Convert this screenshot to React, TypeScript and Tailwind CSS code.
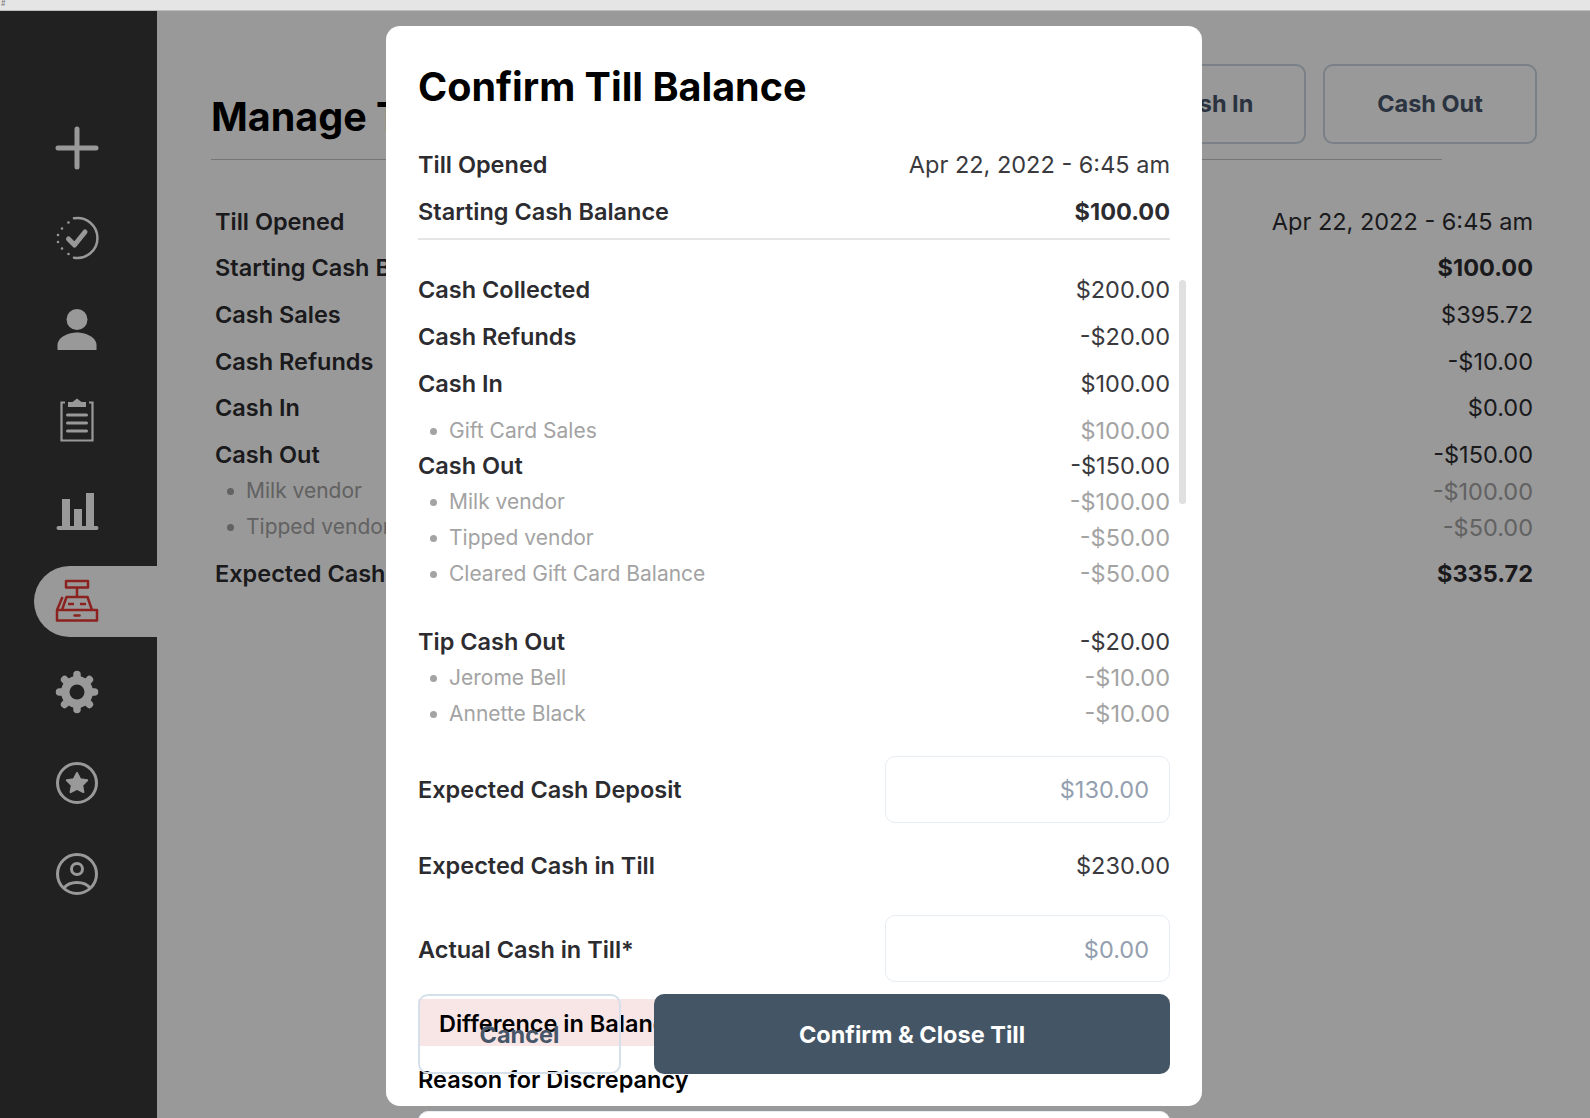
const mainRows = [
  { label: "Till Opened", value: "Apr 22, 2022 - 6:45 am" },
  { label: "Starting Cash Balance", value: "$100.00", strong: true },
  { label: "Cash Sales", value: "$395.72" },
  { label: "Cash Refunds", value: "-$10.00" },
  { label: "Cash In", value: "$0.00" },
  { label: "Cash Out", value: "-$150.00" },
];

function NavIcon({ children, active }: { children: React.ReactNode; active?: boolean }) {
  return (
    <div className={active
      ? "ml-[34px] flex h-[71px] w-[123px] items-center rounded-l-[36px] bg-white pl-[21px] text-[#e83a35]"
      : "ml-[34px] flex h-[71px] w-[123px] items-center pl-[21px] text-white"}>
      <svg viewBox="0 0 44 44" className="h-[44px] w-[44px]" fill="none" stroke="currentColor">{children}</svg>
    </div>
  );
}

function Sidebar() {
  return (
    <aside className="flex w-[157px] shrink-0 flex-col gap-[19.800px] bg-[#37373a] pt-[101px]">
      <NavIcon>
        <path d="M22 3v38M3 22h38" strokeWidth="5" strokeLinecap="round" />
      </NavIcon>
      <NavIcon>
        <path d="M19 2.300A20 20 0 1 1 19 41.700" strokeWidth="2.500" strokeLinecap="round" />
        <path d="M13.500 6.500L13.400 6.500M7 12.500L7 12.500M3 19L3 19M3 26L3 26M7 32.500L7 32.500M13.500 38L13.500 38" strokeWidth="2.600" strokeLinecap="round" />
        <path d="M13.500 23l6 6 10.500-13" strokeWidth="5" strokeLinecap="round" strokeLinejoin="round" />
      </NavIcon>
      <NavIcon>
        <circle cx="22" cy="12.500" r="10.500" fill="currentColor" stroke="none" />
        <path d="M2.500 43v-5c0-8 11.500-12.500 19.500-12.500s19.500 4.500 19.500 12.500v5z" fill="currentColor" stroke="none" />
      </NavIcon>
      <NavIcon>
        <path d="M10 4.500H6.500V42.500H37.500V4.500H34" strokeWidth="2.200" />
        <path d="M13 9V4h4.500L22 0.500 26.500 4H31v5z" fill="currentColor" stroke="none" />
        <path d="M12.500 17h19M12.500 25h19M12.500 33h19" strokeWidth="3" strokeLinecap="round" />
      </NavIcon>
      <NavIcon>
        <path d="M7 10h8v27H7zM19 20h8v17h-8zM31 4h8v33h-8z" fill="currentColor" stroke="none" />
        <path d="M3.500 39h38" strokeWidth="4" strokeLinecap="round" />
      </NavIcon>
      <NavIcon active>
        <path d="M11 2h22v6.500H11zM22 8.500v9.500M11.500 18h21l4.500 13H7zM2 31h40v10.500H2zM2 31l5.500-13M13 25h6M25 25h6" strokeWidth="2.500" strokeLinejoin="round" />
        <path d="M19.500 36.500h5" strokeWidth="2.500" strokeLinecap="round" />
      </NavIcon>
      <NavIcon>
        <circle cx="22" cy="22" r="16" fill="currentColor" stroke="none" />
        <path d="M22 4.500v35M4.500 22h35M9.600 9.600l24.800 24.800M34.400 9.600L9.600 34.400" strokeWidth="7.500" strokeLinecap="round" />
        <circle cx="22" cy="22" r="7.500" fill="#37373a" stroke="none" />
      </NavIcon>
      <NavIcon>
        <circle cx="22" cy="22" r="19.500" strokeWidth="3" />
        <path d="M22 12l3.200 6.300 7 1-5 4.900 1.200 6.900L22 27.900l-6.400 3.200 1.200-6.900-5-4.900 7-1z" fill="currentColor" stroke="currentColor" strokeWidth="2" strokeLinejoin="round" />
      </NavIcon>
      <NavIcon>
        <circle cx="22" cy="22" r="19.500" strokeWidth="3" />
        <circle cx="22" cy="17" r="5.500" strokeWidth="3" />
        <path d="M9 36c3-4 8-5.500 13-5.500s10 1.500 13 5.500" strokeWidth="3" />
      </NavIcon>
    </aside>
  );
}

function MainPage() {
  return (
    <main className="min-w-0 flex-1 pl-[54px] pr-[53px] pt-[53px]">
      <div className="flex items-center justify-between">
        <h1 className="pt-[26px] text-[39.500px] font-bold leading-[48px] text-black">Manage Till</h1>
        <div className="flex gap-[17px]">
          <button className="h-[80px] w-[191px] rounded-[10px] border-2 border-[#cbd5e1] text-[23.500px] font-bold text-[#475569]">Cash In</button>
          <button className="h-[80px] w-[214px] rounded-[10px] border-2 border-[#cbd5e1] text-[23.500px] font-bold text-[#475569]">Cash Out</button>
        </div>
      </div>
      <div className="mt-[15px] h-[1px] w-[1231px] bg-[#c4c4c4]" />
      <div className="mt-[38px] px-[4px] text-[23.500px] text-[#2c2c30]">
        {mainRows.map((r) => (
          <div key={r.label} className="flex h-[46.700px] items-center justify-between">
            <span className="font-semibold">{r.label}</span>
            <span className={r.strong ? "font-bold" : ""}>{r.value}</span>
          </div>
        ))}
        <div className="-mt-[5px] flex h-[36px] items-center justify-between text-[21px] text-[#a3a3a3]">
          <span className="flex items-center"><i className="ml-[12px] mr-[12px] h-[7px] w-[7px] rounded-full bg-[#a3a3a3]" />Milk vendor</span>
          <span className="text-[23.500px]">-$100.00</span>
        </div>
        <div className="flex h-[36px] items-center justify-between text-[21px] text-[#a3a3a3]">
          <span className="flex items-center"><i className="ml-[12px] mr-[12px] h-[7px] w-[7px] rounded-full bg-[#a3a3a3]" />Tipped vendor</span>
          <span className="text-[23.500px]">-$50.00</span>
        </div>
        <div className="mt-[5px] flex h-[46.700px] items-center justify-between">
          <span className="font-semibold">Expected Cash in Till</span>
          <span className="font-bold">$335.72</span>
        </div>
      </div>
    </main>
  );
}

function Row({ label, value, strong, h = "h-[47px]" }: { label: string; value: string; strong?: boolean; h?: string }) {
  return (
    <div className={`flex items-center justify-between ${h}`}>
      <span className="font-semibold text-[#2c2c30]">{label}</span>
      <span className={strong ? "font-bold text-[#2c2c30]" : "text-[#3a3a3e]"}>{value}</span>
    </div>
  );
}

function Sub({ label, value }: { label: string; value: string }) {
  return (
    <div className="flex h-[36px] items-center justify-between text-[21px] text-[#a3a3a3]">
      <span className="flex items-center">
        <i className="ml-[12px] mr-[12px] h-[7px] w-[7px] rounded-full bg-[#a3a3a3]" />
        {label}
      </span>
      <span className="text-[23.500px]">{value}</span>
    </div>
  );
}

function FakeInput({ value }: { value: string }) {
  return (
    <div className="flex h-[67px] w-[285px] items-center justify-end rounded-[10px] border border-[#e8edf2] pr-[20px] pt-[2px] text-[#94a0b0]">
      {value}
    </div>
  );
}

function ConfirmModal() {
  return (
    <div className="absolute left-[386px] top-[26px] h-[1080px] w-[816px] rounded-[14px] bg-white px-[32px] pt-[37px] text-[23.500px]">
      <h2 className="text-[39.500px] font-bold leading-[48px] text-black">Confirm Till Balance</h2>
      <div className="mt-[30px]">
        <Row label="Till Opened" value="Apr 22, 2022 - 6:45 am" />
        <Row label="Starting Cash Balance" value="$100.00" strong />
      </div>
      <div className="mt-[2.500px] h-[2px] bg-[#e5e5e5]" />

      <div className="mt-[26.500px]">
        <Row label="Cash Collected" value="$200.00" />
        <Row label="Cash Refunds" value="-$20.00" />
        <Row label="Cash In" value="$100.00" />
        <div className="mt-[6px]">
          <Sub label="Gift Card Sales" value="$100.00" />
        </div>
        <Row label="Cash Out" value="-$150.00" h="h-[34px]" />
        <div className="mt-[1px]">
          <Sub label="Milk vendor" value="-$100.00" />
          <Sub label="Tipped vendor" value="-$50.00" />
          <Sub label="Cleared Gift Card Balance" value="-$50.00" />
        </div>
        <div className="mt-[32px]">
          <Row label="Tip Cash Out" value="-$20.00" h="h-[36px]" />
        </div>
        <div>
          <Sub label="Jerome Bell" value="-$10.00" />
          <Sub label="Annette Black" value="-$10.00" />
        </div>
      </div>

      <div className="mt-[23.500px] flex items-center justify-between">
        <span className="pt-[2px] font-semibold text-[#2c2c30]">Expected Cash Deposit</span>
        <FakeInput value="$130.00" />
      </div>
      <div className="mt-[20px]">
        <Row label="Expected Cash in Till" value="$230.00" />
      </div>
      <div className="mt-[25.500px] flex items-center justify-between">
        <span className="pt-[2px] font-semibold text-[#2c2c30]">Actual Cash in Till*</span>
        <FakeInput value="$0.00" />
      </div>

      <div className="mt-[17px] flex h-[47px] items-center bg-[#f8e6e6] pl-[21px] pt-[2px] font-semibold text-black">Difference in Balance</div>
      <div className="mt-[17px] flex h-[34px] items-center font-semibold text-black">Reason for Discrepancy</div>
      <div className="mt-[14px] h-[120px] rounded-[10px] border border-[#e8edf2] bg-white" />

      <div className="absolute bottom-[32px] left-[32px] right-[32px] flex gap-[33px]">
        <button className="h-[80px] w-[203px] rounded-[10px] border-2 border-[#d5e0ea] pt-[1px] text-[23.500px] font-bold text-[#475569]">Cancel</button>
        <button className="h-[80px] flex-1 rounded-[10px] bg-[#445566] pt-[1px] text-[23.500px] font-bold text-white">Confirm &amp; Close Till</button>
      </div>
    </div>
  );
}

export default function App() {
  return (
    <div className="relative flex h-[1118px] flex-col overflow-hidden bg-white font-['Inter',sans-serif]">
      <div className="h-[11px] shrink-0 border-b border-[#bdbdbd] bg-[#e5e5e5] pl-[1px] text-[7px] leading-[8px] text-[#777]">#</div>
      <div className="flex min-h-0 flex-1">
        <Sidebar />
        <MainPage />
      </div>
      <div className="absolute inset-x-0 bottom-0 top-[11px] bg-black/40" />
      <ConfirmModal />
      <div className="absolute left-[1179px] top-[280px] h-[224px] w-[7px] rounded-full bg-[#e0e0e0]" />
    </div>
  );
}
